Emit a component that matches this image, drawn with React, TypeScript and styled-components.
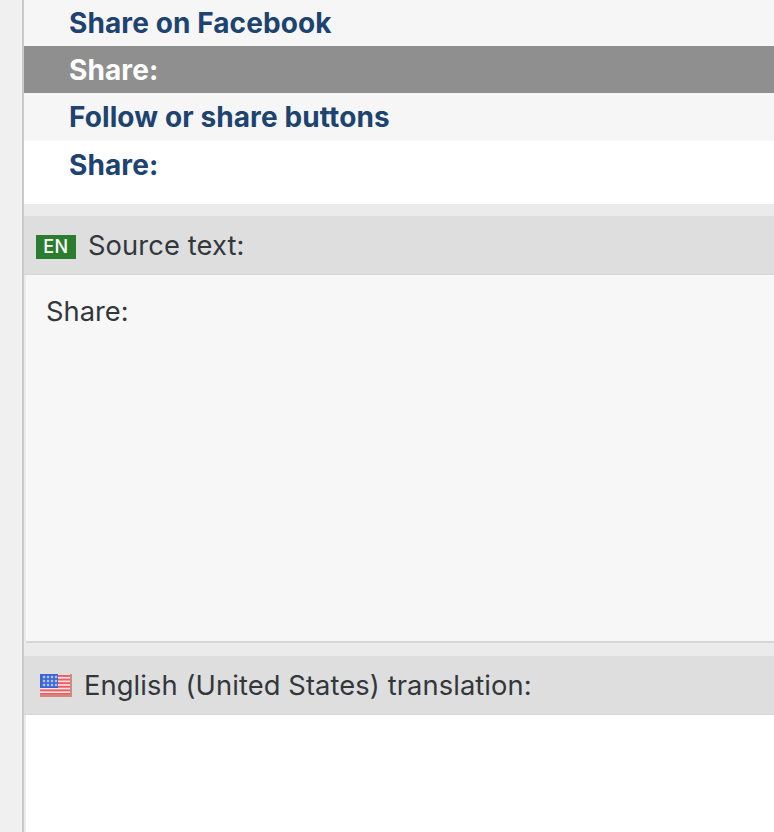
import React from 'react';
import styled, { createGlobalStyle } from 'styled-components';

const Global = createGlobalStyle`
  html, body { margin: 0; padding: 0; height: 100%; overflow: hidden; background: #f0f0f1; }
  body { font-family: Inter, "Liberation Sans", sans-serif; }
`;

const Shell = styled.div`
  height: 832px;
  width: 774px;
  padding-left: 22px;
  box-sizing: border-box;
  overflow: hidden;
`;

const Panel = styled.div`
  height: 100%;
  border-left: 2px solid #c9c9c9;
  background: #ebebeb;
  display: flex;
  flex-direction: column;
`;

const Row = styled.div<{ $tone: 'plain' | 'selected' | 'white'; $height: number }>`
  height: ${p => p.$height}px;
  flex-shrink: 0;
  padding: ${p => (p.$tone === 'white' ? '0 0 15px 45px' : '0 0 0 45px')};
  box-sizing: border-box;
  display: flex;
  align-items: center;
  font-size: 28px;
  font-weight: 700;
  letter-spacing: 0.1px;
  color: ${p => (p.$tone === 'selected' ? '#fff' : '#1d4370')};
  background: ${p => ({ plain: '#f6f6f6', selected: '#8f8f8f', white: '#fff' }[p.$tone])};
`;

const SectionHeader = styled.div<{ $pad: number }>`
  height: 59px;
  flex-shrink: 0;
  box-sizing: border-box;
  background: #dedede;
  border-bottom: 1px solid #d6d6d6;
  display: flex;
  align-items: center;
  padding-left: ${p => p.$pad}px;
  gap: 12px;
  font-size: 27.3px;
  letter-spacing: 0.1px;
  color: #32373c;
`;

const LangBadge = styled.span`
  width: 40px;
  height: 24px;
  margin-top: 3px;
  background: #2a7d2e;
  color: #fff;
  font-size: 18px;
  font-weight: 500;
  letter-spacing: 0.4px;
  display: flex;
  align-items: center;
  justify-content: center;
`;

const SourceBox = styled.div`
  height: 368px;
  flex-shrink: 0;
  box-sizing: border-box;
  margin-left: 2px;
  padding: 20px 20px;
  background: #f7f7f7;
  border-bottom: 2px solid #d6d6d6;
  font-size: 27.3px;
  line-height: 34px;
  color: #32373c;
`;

const Spacer = styled.div<{ $height: number }>`
  height: ${p => p.$height}px;
  flex-shrink: 0;
`;

const TranslationBox = styled.div`
  flex: 1;
  margin-left: 2px;
  background: #fff;
`;

const FlagIcon = styled.svg`
  width: 32px;
  height: 23px;
  margin-top: 1px;
  filter: blur(0.5px);
`;

function UsFlag() {
  const stripes = [0, 1, 2, 3, 4, 5];
  return (
    <FlagIcon viewBox="0 0 32 23" preserveAspectRatio="none">
      <rect width="32" height="23" fill="#f6e4e4" />
      {stripes.map(i => (
        <rect key={i} y={i * 3.6 + 1} width="32" height="1.9" fill="#ee5a5f" />
      ))}
      <rect y="20.5" width="32" height="2.5" fill="#d7857c" />
      <rect x="30" width="2" height="23" fill="#c98f85" />
      <rect width="18" height="14" fill="#3d63cf" />
      {[3, 7, 11].map(y =>
        [4, 8, 12, 16].map(x => (
          <rect key={`${x}-${y}`} x={x - 1.2} y={y - 1.2} width="2.4" height="2.4" fill="#a9c2f7" />
        ))
      )}
    </FlagIcon>
  );
}

export default function App() {
  return (
    <>
      <Global />
      <Shell>
        <Panel>
          <Row $tone="plain" $height={46}>Share on Facebook</Row>
          <Row $tone="selected" $height={47}>Share:</Row>
          <Row $tone="plain" $height={48}>Follow or share buttons</Row>
          <Row $tone="white" $height={63}>Share:</Row>
          <Spacer $height={12} />
          <SectionHeader $pad={12}>
            <LangBadge>EN</LangBadge>
            Source text:
          </SectionHeader>
          <SourceBox>Share:</SourceBox>
          <Spacer $height={13} />
          <SectionHeader $pad={16}>
            <UsFlag />
            English (United States) translation:
          </SectionHeader>
          <TranslationBox />
        </Panel>
      </Shell>
    </>
  );
}
